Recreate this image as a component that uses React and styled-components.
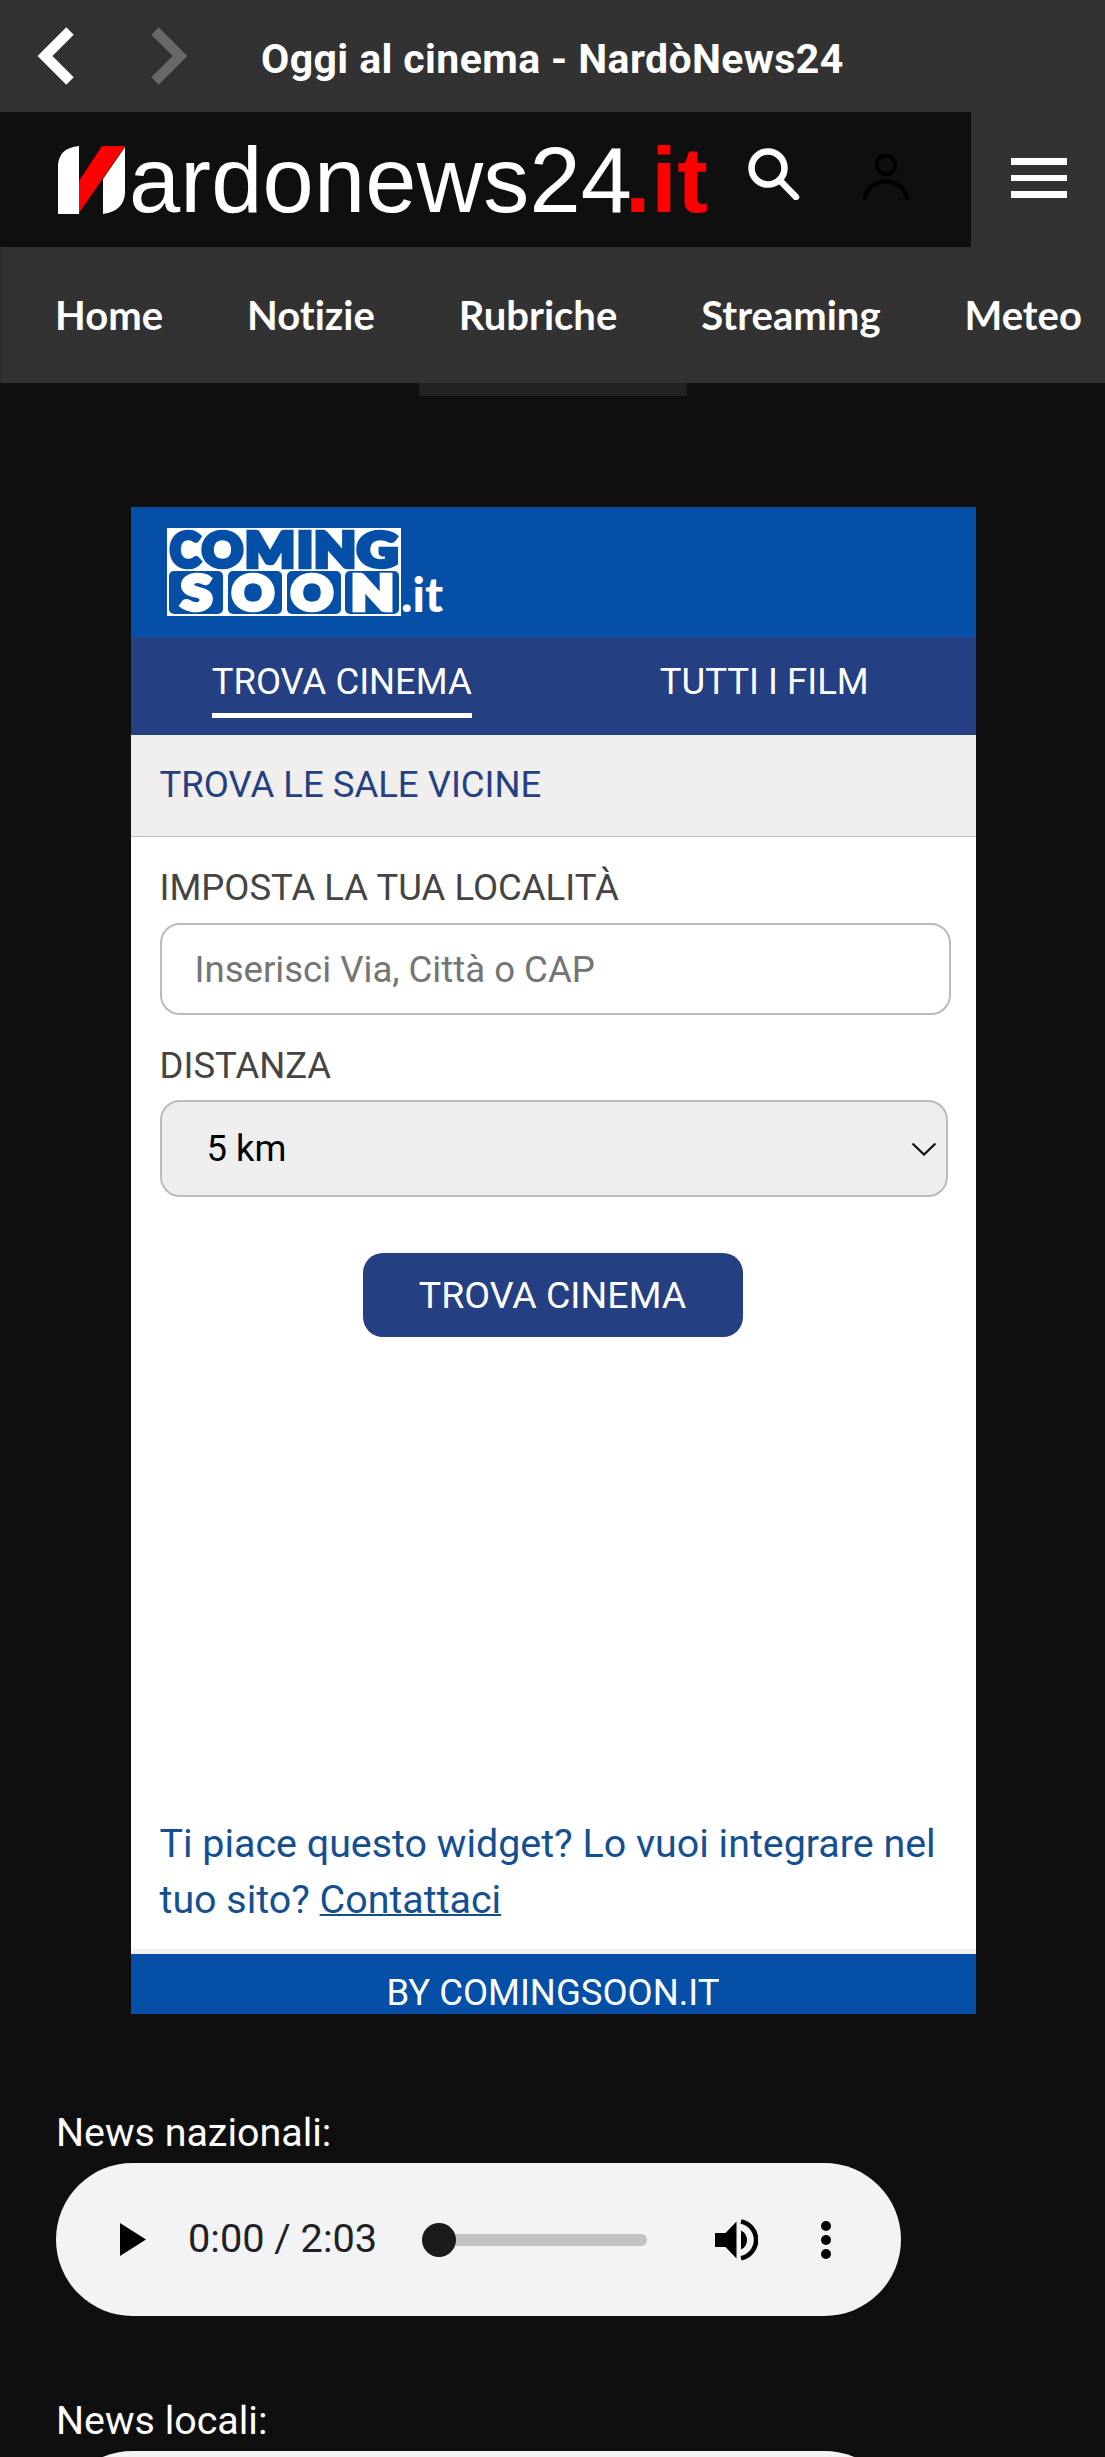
import React, { Component } from 'react'
import styled, { createGlobalStyle } from 'styled-components'

const GlobalStyle = createGlobalStyle`
  * {
    box-sizing: border-box;
  }

  body {
    margin: 0;
    background: #0f0f0f;
    font-family: Roboto, sans-serif;
  }
`

const menuItems = ['Home', 'Notizie', 'Rubriche', 'Streaming', 'Meteo']

// letter, x, width
const comingLetters = [
  ['C', 3, 30],
  ['O', 35, 41],
  ['M', 78, 50],
  ['I', 130, 16],
  ['N', 147, 42],
  ['G', 190, 41],
]

// letter, box x, letter x, width
const soonLetters = [
  ['S', 2, 14, 31],
  ['O', 61, 65, 42],
  ['O', 120, 124, 42],
  ['N', 178, 184, 43],
]

const SiteLogo = () => (
  <Brand viewBox="0 0 660 70">
    <path d="M0 69V20Q1 3 21 1V69Z" fill="#fff" />
    <path d="M67 2V48Q66 66 45 69V34Z" fill="#fff" />
    <path d="M44 1H67L21 68V36Z" fill="#f00" />
    <text x="71" y="67" fontSize="92" fill="#fff" textLength="503">ardonews24</text>
    <text x="567" y="67" fontSize="92" fontWeight="700" fill="#f00" textLength="83">.it</text>
  </Brand>
)

const ComingSoonLogo = () => (
  <ComingSoon viewBox="0 0 280 88">
    <rect width="234" height="88" fill="#fff" />
    {comingLetters.map(([letter, x, width]) => (
      <text
        key={letter}
        x={x}
        y="38.500"
        fontSize="47"
        fill="#054fa7"
        stroke="#054fa7"
        strokeWidth="4.500"
        textLength={width}
        lengthAdjust="spacingAndGlyphs"
      >
        {letter}
      </text>
    ))}
    {soonLetters.map(([letter, boxX, x, width]) => (
      <g key={boxX}>
        <rect x={boxX} y="43" width="54" height="43" rx="5" fill="#054fa7" />
        <text
          x={x}
          y="81.500"
          fontSize="47"
          fill="#fff"
          stroke="#fff"
          strokeWidth="4.500"
          textLength={width}
          lengthAdjust="spacingAndGlyphs"
        >
          {letter}
        </text>
      </g>
    ))}
    <text x="234" y="84" fontSize="47" fill="#fff" textLength="42" lengthAdjust="spacingAndGlyphs">.it</text>
  </ComingSoon>
)

class Player extends Component {
  render() {
    const { label, duration } = this.props
    return (
      <PlayerBlock>
        <PlayerLabel>{label}</PlayerLabel>
        <PlayerBar>
          <PlayIcon viewBox="0 0 26 33"><path d="M0 0L26 16.5L0 33Z" /></PlayIcon>
          <Time>0:00 / {duration}</Time>
          <Track><Knob /></Track>
          <VolumeIcon viewBox="0 0 43 42">
            <path d="M0 14H10.500L21.500 2.500V39.500L10.500 28H0Z" />
            <path d="M26 11.500Q32 14.500 32 21T26 30.500Z" />
            <path d="M26 2.500A18.700 18.700 0 0 1 26 39.200" fill="none" stroke="#000" strokeWidth="4.600" />
          </VolumeIcon>
          <MoreIcon viewBox="0 0 10 40">
            <circle cx="5" cy="6" r="5" />
            <circle cx="5" cy="20" r="5" />
            <circle cx="5" cy="34" r="5" />
          </MoreIcon>
        </PlayerBar>
      </PlayerBlock>
    )
  }
}

class App extends Component {
  constructor(props) {
    super(props)
    this.state = { place: '' }
    this.handleInput = this.handleInput.bind(this)
  }

  handleInput(event) {
    this.setState({ place: event.target.value })
  }

  render() {
    return (
      <Page>
        <GlobalStyle />
        <TopBar>
          <Arrow viewBox="0 0 38 58"><path d="M33 4L8 29L33 54" /></Arrow>
          <Arrow viewBox="0 0 38 58" $disabled><path d="M5 4L30 29L5 54" /></Arrow>
          <PageTitle>Oggi al cinema - NardòNews24</PageTitle>
        </TopBar>

        <Header>
          <SiteLogo />
          <SearchIcon viewBox="0 0 52 52">
            <circle cx="20" cy="20" r="16.500" />
            <path d="M31.500 32L48 49" />
          </SearchIcon>
          <UserIcon viewBox="0 0 46 48">
            <circle cx="23" cy="13" r="9.200" />
            <path d="M2 46C6 24 40 24 44 46" />
          </UserIcon>
          <MenuButton>
            <MenuLine />
            <MenuLine />
            <MenuLine />
          </MenuButton>
        </Header>

        <Nav>
          {menuItems.map(item => <NavItem key={item}>{item}</NavItem>)}
        </Nav>
        <NavHandle />

        <Widget>
          <WidgetHeader><ComingSoonLogo /></WidgetHeader>
          <Tabs>
            <Tab><TabLabel $active>TROVA CINEMA</TabLabel></Tab>
            <Tab><TabLabel>TUTTI I FILM</TabLabel></Tab>
          </Tabs>
          <SectionTitle>TROVA LE SALE VICINE</SectionTitle>
          <Form>
            <Label>IMPOSTA LA TUA LOCALITÀ</Label>
            <PlaceInput
              placeholder="Inserisci Via, Città o CAP"
              value={this.state.place}
              onChange={this.handleInput}
            />
            <Label>DISTANZA</Label>
            <Distance>
              5 km
              <Chevron viewBox="0 0 26 14"><path d="M1.500 1.500L13 12.500L24.500 1.500" /></Chevron>
            </Distance>
            <SubmitButton>TROVA CINEMA</SubmitButton>
          </Form>
          <Promo>
            Ti piace questo widget? Lo vuoi integrare nel<br />tuo sito? <a href="#contatti">Contattaci</a>
          </Promo>
          <Credits>BY COMINGSOON.IT</Credits>
        </Widget>

        <Players>
          <Player label="News nazionali:" duration="2:03" />
          <Player label="News locali:" duration="2:03" />
        </Players>
      </Page>
    )
  }
}

const Page = styled.div`
  width: 1105px;
  height: 2457px;
  overflow: hidden;
  background: #0f0f0f;
`

const TopBar = styled.div`
  display: flex;
  align-items: center;
  height: 112px;
  padding-left: 37px;
  background: #323232;
`

const Arrow = styled.svg`
  width: 38px;
  height: 58px;
  margin-right: ${props => (props.$disabled ? '73px' : '75px')};
  fill: none;
  stroke: ${props => (props.$disabled ? '#686868' : '#fff')};
  stroke-width: 10.5;
`

const PageTitle = styled.div`
  padding-top: 5px;
  color: #fff;
  font-size: 41px;
  font-weight: 700;
  letter-spacing: 0.4px;
  line-height: 48px;
  white-space: nowrap;
`

const Header = styled.header`
  display: flex;
  height: 135px;
  padding-left: 58px;
`

const Brand = styled.svg`
  width: 660px;
  height: 70px;
  margin-top: 33px;
  overflow: visible;
  font-family: 'Liberation Sans', Arial, sans-serif;
`

const SearchIcon = styled.svg`
  width: 52px;
  height: 52px;
  margin: 36px 0 0 30px;
  fill: none;
  stroke: #fff;
  stroke-width: 6.5;
  stroke-linecap: round;
`

const UserIcon = styled.svg`
  width: 46px;
  height: 48px;
  margin: 40px 0 0 63px;
  fill: none;
  stroke: #000;
  stroke-width: 4;
  stroke-linecap: round;
`

const MenuButton = styled.div`
  display: flex;
  flex-direction: column;
  gap: 10px;
  width: 134px;
  height: 136px;
  margin-left: auto;
  padding: 46px 0 0 40px;
  background: #323232;
`

const MenuLine = styled.div`
  width: 56px;
  height: 6.5px;
  background: #fff;
`

const Nav = styled.nav`
  display: flex;
  height: 136px;
  padding-left: 12px;
  border-left: 1px solid #292929;
  background: #323232;
`

const NavItem = styled.div`
  padding: 0 42px;
  color: #fff;
  font-family: Lato, sans-serif;
  font-size: 40px;
  font-weight: 700;
  font-variant-ligatures: none;
  line-height: 137px;
`

const NavHandle = styled.div`
  width: 268px;
  height: 13px;
  margin: 0 auto 111px;
  background: #222;
`

const Widget = styled.section`
  display: flex;
  flex-direction: column;
  width: 845px;
  height: 1507px;
  margin-left: 130.5px;
  background: #fff;
`

const WidgetHeader = styled.div`
  height: 130px;
  padding: 21px 0 0 36px;
  background: #054fa7;
`

const ComingSoon = styled.svg`
  display: block;
  width: 280px;
  height: 88px;
  overflow: visible;
  font-family: Lato, sans-serif;
  font-weight: 900;
`

const Tabs = styled.div`
  display: flex;
  height: 98px;
  background: #243f82;
`

const Tab = styled.div`
  flex: 1;
  display: flex;
  justify-content: center;
  align-items: flex-start;
`

const TabLabel = styled.div`
  height: 81px;
  padding-top: 23px;
  border-bottom: 5px solid ${props => (props.$active ? '#fff' : 'transparent')};
  color: #fff;
  font-size: 36.5px;
  line-height: 44px;
`

const SectionTitle = styled.div`
  height: 102px;
  padding: 28px 0 0 29px;
  border-bottom: 1.5px solid #bbb;
  background: #f0efee;
  color: #243f82;
  font-size: 36.5px;
  line-height: 44px;
`

const Form = styled.div`
  flex: 1;
  padding: 29px 25px 0 29px;
`

const Label = styled.div`
  color: #444;
  font-size: 36.5px;
  line-height: 44px;
`

const PlaceInput = styled.input`
  display: block;
  width: 791px;
  height: 92px;
  margin: 13px 0 29px;
  padding: 0 33px;
  border: 2px solid #bbb;
  border-radius: 20px;
  font-family: Roboto, sans-serif;
  font-size: 36.6px;

  &::placeholder {
    color: #757575;
  }
`

const Distance = styled.div`
  display: flex;
  align-items: center;
  justify-content: space-between;
  width: 788px;
  height: 97px;
  margin-top: 12px;
  padding: 0 9px 0 45px;
  border: 2px solid #bbb;
  border-radius: 20px;
  background: #eee;
  color: #000;
  font-size: 36.4px;
`

const Chevron = styled.svg`
  width: 26px;
  height: 14px;
  fill: none;
  stroke: #111;
  stroke-width: 2.2;
`

const SubmitButton = styled.button`
  display: block;
  width: 380px;
  height: 84px;
  margin: 56px 0 0 203px;
  padding: 0;
  border: 0;
  border-radius: 20px;
  background: #243f82;
  color: #fff;
  font-family: Roboto, sans-serif;
  font-size: 37.5px;
`

const Promo = styled.div`
  height: 138px;
  padding-left: 29px;
  border-bottom: 5px solid #f0f0f0;
  color: #144f92;
  font-size: 39.4px;
  line-height: 56px;
  white-space: nowrap;

  a {
    color: inherit;
    text-decoration-thickness: 2px;
  }
`

const Credits = styled.div`
  height: 60px;
  padding-top: 17px;
  background: #054fa7;
  color: #fff;
  font-size: 36.5px;
  line-height: 44px;
  text-align: center;
`

const Players = styled.div`
  display: flex;
  flex-direction: column;
  gap: 81px;
  padding: 95px 0 0 56px;
`

const PlayerBlock = styled.div`
  width: 845px;
`

const PlayerLabel = styled.div`
  color: #fff;
  font-size: 39.4px;
  line-height: 48px;
`

const PlayerBar = styled.div`
  display: flex;
  align-items: center;
  height: 153px;
  margin-top: 6px;
  padding-left: 64px;
  border-radius: 77px;
  background: #f1f3f4;
`

const PlayIcon = styled.svg`
  width: 26px;
  height: 33px;
`

const Time = styled.div`
  width: 233px;
  padding: 0 0 2px 42px;
  color: #202124;
  font-size: 39.7px;
  white-space: nowrap;
`

const Track = styled.div`
  display: flex;
  align-items: center;
  width: 225px;
  height: 12px;
  margin-left: 43px;
  border-radius: 6px;
  background: #c1c2c3;
`

const Knob = styled.div`
  width: 34px;
  height: 34px;
  border-radius: 50%;
  background: #1b1b1c;
`

const VolumeIcon = styled.svg`
  width: 43px;
  height: 42px;
  margin-left: 68px;
`

const MoreIcon = styled.svg`
  width: 10px;
  height: 40px;
  margin-left: 63px;
`

export default App
